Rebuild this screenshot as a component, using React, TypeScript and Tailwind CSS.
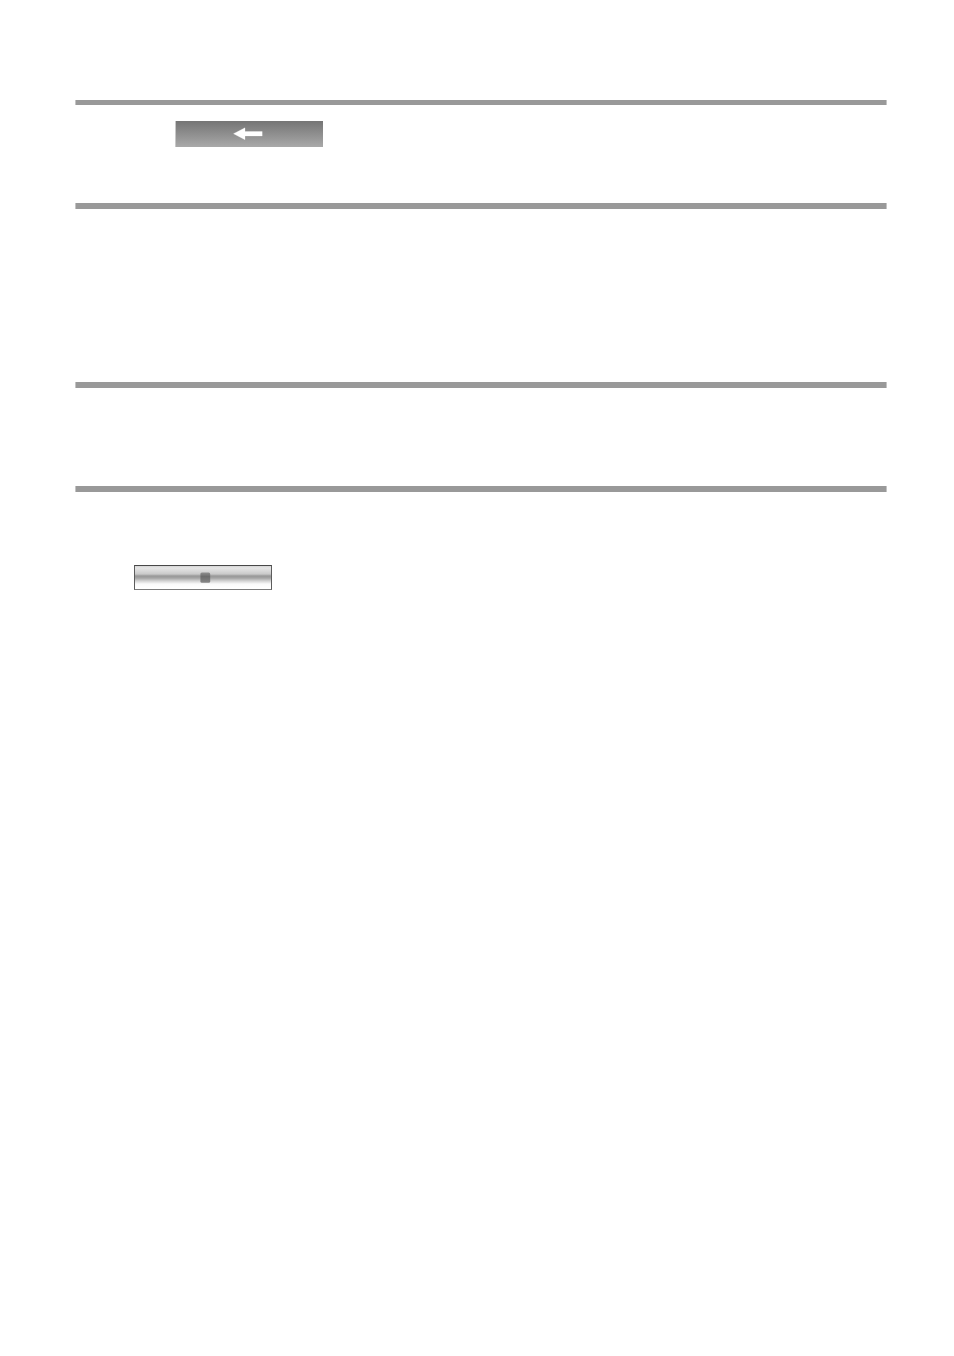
function Rule() {
  return <hr className="h-1.5 w-full border-0 border-x border-[#c4c4c4] bg-[#999999]" />;
}

function BackButton() {
  return (
    <button
      type="button"
      aria-label="Back"
      className="flex h-[26px] w-[148px] items-center border-l border-[#c8c8c8] bg-linear-to-b from-[#757575] to-[#a9a9a9] pl-[57px]"
    >
      <svg width="30" height="14" viewBox="0 0 30 14" aria-hidden="true">
        <path d="M0.5 6.7 12 0.8V4.5H29.2V9H12V12.7Z" fill="#fff" stroke="#fff" strokeOpacity="0.3" strokeWidth="0.8" />
      </svg>
    </button>
  );
}

function StopButton() {
  return (
    <button
      type="button"
      aria-label="Stop"
      className="flex h-[25px] w-[138px] items-center border border-[#7c7c7c] border-t-[#484848] border-r-[#5c5c5c] border-l-[#5c5c5c] bg-[linear-gradient(to_bottom,#d4d4d4_0px,#e6e6e6_2px,#d8d8d8_5px,#cacaca_8px,#989898_10px,#a4a4a4_12px,#d4d4d4_15px,#fafafa_18px,#ffffff_22px)] pl-[65px]"
    >
      <svg width="11" height="12" viewBox="0 0 11 12" aria-hidden="true">
        <defs>
          <linearGradient id="stop-fill" x1="0" y1="0" x2="0" y2="1">
            <stop offset="0" stopColor="#909090" />
            <stop offset="0.4" stopColor="#6c6c6c" />
            <stop offset="1" stopColor="#868686" />
          </linearGradient>
        </defs>
        <rect x="0.4" y="0.4" width="9.8" height="10.4" rx="1.5" fill="url(#stop-fill)" />
      </svg>
    </button>
  );
}

export default function App() {
  return (
    <main className="min-h-screen bg-white pt-[100px] pr-[67px] pb-16 pl-[75px]">
      <hr className="h-[5px] w-full border-0 border-x border-[#c4c4c4] bg-[#999999]" />
      <section className="h-[98px] pt-4 pl-[100px]">
        <BackButton />
      </section>
      <Rule />
      <section className="h-[173px]" />
      <Rule />
      <section className="h-[98px]" />
      <Rule />
      <section className="pt-[73px] pl-[59px]">
        <StopButton />
      </section>
    </main>
  );
}
